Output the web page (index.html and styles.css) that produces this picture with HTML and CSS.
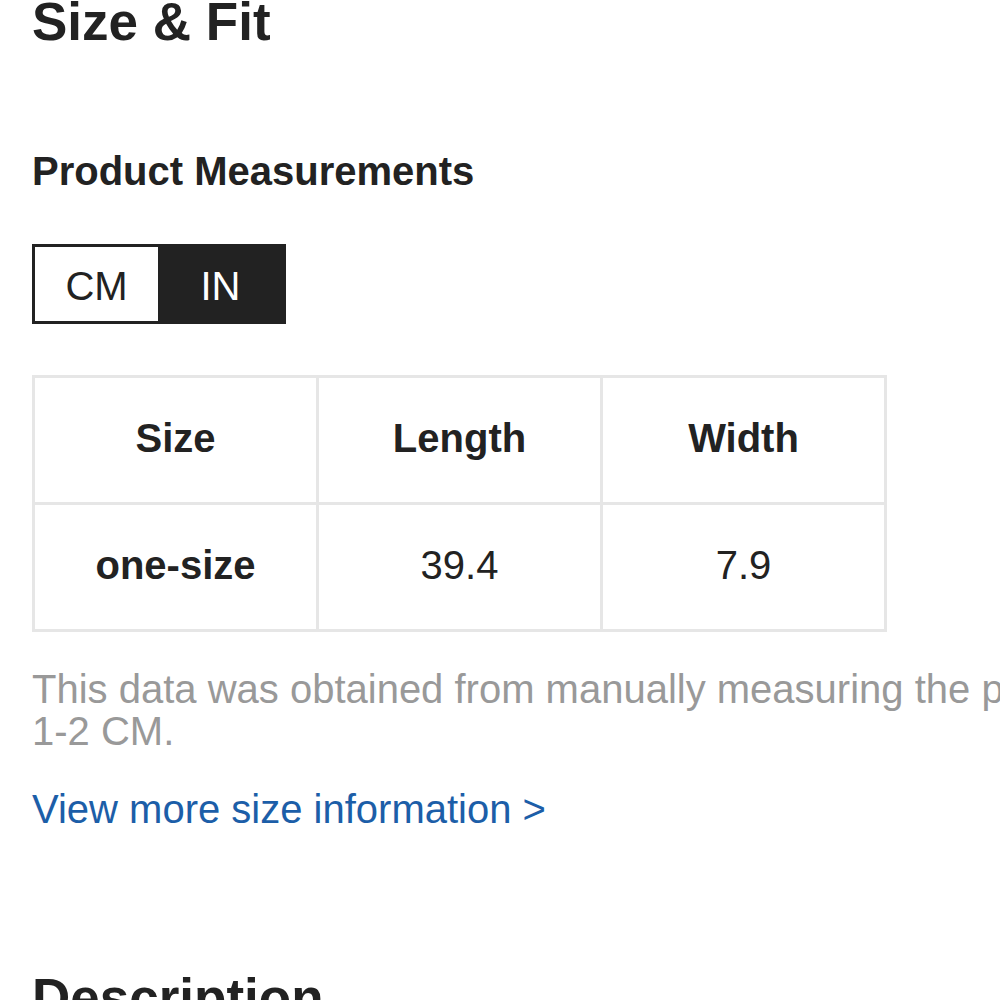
FILE: index.html
```html
<!DOCTYPE html>
<html lang="en">
<head>
<meta charset="utf-8">
<title>Size &amp; Fit</title>
<link rel="stylesheet" href="styles.css">
</head>
<body>
<main class="page">
  <section class="size-fit">
    <h1 class="section-title">Size &amp; Fit</h1>
    <h2 class="sub-title">Product Measurements</h2>
    <div class="unit-toggle">
      <span class="unit">CM</span>
      <span class="unit unit-active">IN</span>
    </div>
    <table class="measure-table">
      <tr>
        <th>Size</th>
        <th>Length</th>
        <th>Width</th>
      </tr>
      <tr>
        <th>one-size</th>
        <td>39.4</td>
        <td>7.9</td>
      </tr>
    </table>
    <p class="note">This data was obtained from manually measuring the product, it may be off by 1-2 CM.</p>
    <a class="more-link" href="#">View more size information &gt;</a>
  </section>
  <section class="description">
    <h1 class="section-title">Description</h1>
  </section>
</main>
</body>
</html>
```

FILE: styles.css
```css
html, body {
  margin: 0;
  padding: 0;
  background: #ffffff;
  overflow: hidden;
}

body {
  font-family: "Liberation Sans", Arial, sans-serif;
  color: #222222;
}

.page {
  padding-left: 32px;
  width: 1400px;
}

.section-title {
  margin: -8px 0 0 0;
  font-size: 53px;
  line-height: 60px;
  font-weight: 700;
  color: #222222;
}

.sub-title {
  margin: 96px 0 0 0;
  font-size: 40px;
  line-height: 46px;
  font-weight: 700;
}

.unit-toggle {
  margin-top: 50px;
  display: flex;
  width: 254px;
  height: 80px;
  box-sizing: border-box;
  border: 3px solid #222222;
}

.unit {
  flex: 0 0 123px;
  display: flex;
  align-items: center;
  justify-content: center;
  padding-top: 4px;
  box-sizing: border-box;
  font-size: 40px;
  color: #222222;
  background: #ffffff;
}

.unit-active {
  flex: 1 1 auto;
  background: #222222;
  color: #ffffff;
}

.measure-table {
  margin-top: 51px;
  width: 855px;
  border-collapse: collapse;
  table-layout: fixed;
}

.measure-table th,
.measure-table td {
  border: 3px solid #e6e6e6;
  height: 120px;
  padding: 0 0 4px 0;
  text-align: center;
  vertical-align: middle;
  font-size: 40px;
  color: #222222;
}

.measure-table th {
  font-weight: 700;
}

.measure-table td {
  font-weight: 400;
}

.note {
  margin: 36px 0 0 0;
  font-size: 40px;
  line-height: 42px;
  color: #999999;
}

.more-link {
  display: block;
  margin-top: 34px;
  font-size: 40px;
  line-height: 46px;
  color: #1c5ea8;
  text-decoration: none;
}

.description {
  margin-top: 144px;
}
```
